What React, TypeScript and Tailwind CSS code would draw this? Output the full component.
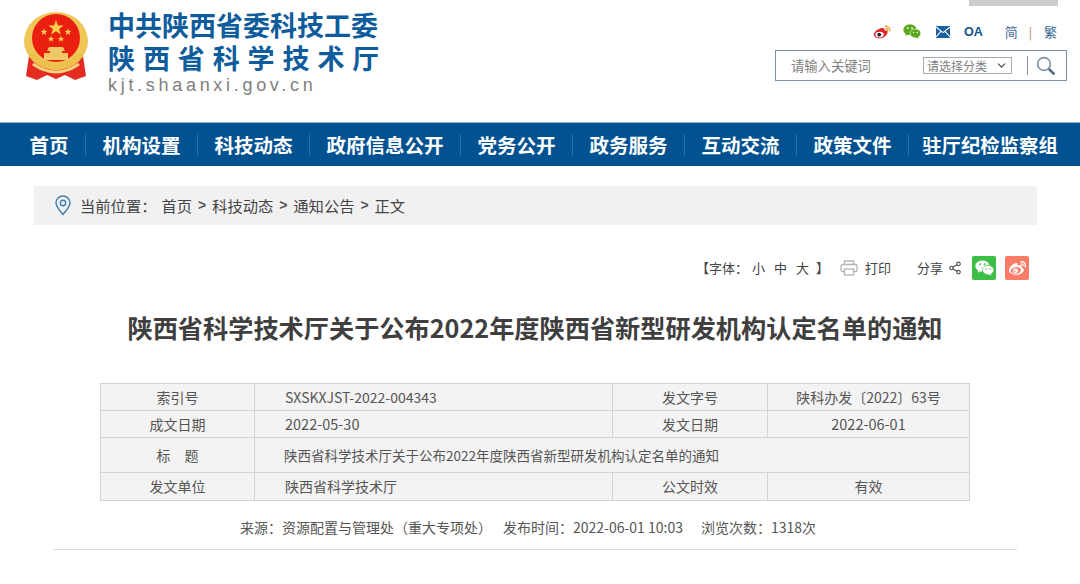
import type { ReactNode } from "react";
import { FiChevronDown, FiShare2 } from "react-icons/fi";
import { FaWeibo } from "react-icons/fa";

const font = "font-['Noto_Sans_CJK_SC','Noto_Sans',sans-serif]";

const navItems = ["首页", "机构设置", "科技动态", "政府信息公开", "党务公开", "政务服务", "互动交流", "政策文件"];

function starPoints(cx: number, cy: number, r: number) {
  const pts: string[] = [];
  for (let i = 0; i < 10; i++) {
    const rad = i % 2 === 0 ? r : r * 0.4;
    const a = -Math.PI / 2 + (i * Math.PI) / 5;
    pts.push(`${cx + rad * Math.cos(a)},${cy + rad * Math.sin(a)}`);
  }
  return pts.join(" ");
}

function Emblem() {
  return (
    <svg width="66" height="70" viewBox="0 0 66 70" className="shrink-0 mt-[4px]">
      <path d="M6 44 L3 64 L14 68 L24 63 L33 67 L42 63 L52 68 L63 64 L60 44 Z" fill="#e52b20" />
      <ellipse cx="33" cy="29" rx="32" ry="29" fill="#f0c659" />
      <path d="M6 44 Q33 72 60 44 L56 41 Q33 62 10 41 Z" fill="#edbf4b" />
      <path d="M10 52 Q33 68 56 52" fill="none" stroke="#f4d483" strokeWidth="3" />
      <circle cx="33" cy="26" r="24" fill="#e9200f" />
      <polygon points={starPoints(33, 16, 8)} fill="#f6d34e" />
      <polygon points={starPoints(21, 20, 3.6)} fill="#f6d34e" />
      <polygon points={starPoints(45, 20, 3.6)} fill="#f6d34e" />
      <polygon points={starPoints(28, 27, 3.4)} fill="#f6d34e" />
      <polygon points={starPoints(38, 27, 3.4)} fill="#f6d34e" />
      <path d="M26 35 H40 L42 39 H39 V41 H45 V48 H21 V41 H27 V39 H24 Z" fill="#f0c866" />
    </svg>
  );
}

function WeiboColor() {
  return (
    <svg width="18" height="15" viewBox="0 0 18 15">
      <path d="M7 3.5 C10 2.5 12 3 11.6 5.6 C14 5 15 6 14.6 7.6 C14 11 10 13.5 6.6 13.5 C3.5 13.5 .8 12 .8 9.6 C.8 7.5 4 4.4 7 3.5 Z" fill="#e2242b" />
      <ellipse cx="6.6" cy="9.6" rx="4.2" ry="2.9" fill="#fff" />
      <circle cx="6.2" cy="9.7" r="1.9" fill="#222" />
      <path d="M12 1 A5 5 0 0 1 17 6.5 M12.4 3.4 A2.6 2.6 0 0 1 14.8 6" fill="none" stroke="#f29a1f" strokeWidth="1.3" />
    </svg>
  );
}

function WechatIcon({ color, eye, size }: { color: string; eye: string; size: number }) {
  return (
    <svg width={size} height={size * 0.84} viewBox="0 0 18 15">
      <ellipse cx="7" cy="5.6" rx="6.7" ry="5.3" fill={color} />
      <path d="M3 9 L2.6 12 L6 10 Z" fill={color} />
      <ellipse cx="12.4" cy="9.4" rx="5.4" ry="4.4" fill={color} stroke={eye} strokeWidth=".6" />
      <path d="M15 12.4 L15.6 14.6 L12.8 13.4 Z" fill={color} />
      <circle cx="4.8" cy="4" r=".9" fill={eye} />
      <circle cx="9" cy="4" r=".9" fill={eye} />
      <circle cx="10.6" cy="8.4" r=".7" fill={eye} />
      <circle cx="14.2" cy="8.4" r=".7" fill={eye} />
    </svg>
  );
}

function MailIcon() {
  return (
    <svg width="14" height="12" viewBox="0 0 14 12">
      <rect width="14" height="12" fill="#1a5f9f" />
      <path d="M0 1 L7 6.6 L14 1 M0 11 L5 5.4 M14 11 L9 5.4" fill="none" stroke="#fff" strokeWidth="1.1" />
    </svg>
  );
}

function PrinterIcon() {
  return (
    <svg width="18" height="16" viewBox="0 0 18 16" fill="none" stroke="#b4b4b4" strokeWidth="1.3">
      <path d="M4.5 4.5 V1 H13.5 V4.5" />
      <rect x="1" y="4.5" width="16" height="7" rx="1.6" />
      <rect x="4.5" y="9" width="9" height="6" fill="#fff" />
    </svg>
  );
}

function SearchIcon() {
  return (
    <svg width="20" height="20" viewBox="0 0 20 20" fill="none" className="ml-[8px]">
      <circle cx="8" cy="8" r="6.4" stroke="#7d8fa9" strokeWidth="1.6" />
      <path d="M12.8 12.8 L18.4 18.4" stroke="#4f6484" strokeWidth="2.6" />
    </svg>
  );
}

function MetaRow({ cells, tall }: { cells: ReactNode[]; tall?: boolean }) {
  return (
    <div className={`flex border-b border-[#d3d3d3] last:border-b-0 ${tall ? "h-[35px]" : "h-[27px]"}`}>
      <div className="w-[154px] border-r border-[#d3d3d3] flex items-center justify-center">{cells[0]}</div>
      {cells.length === 2 ? (
        <div className="flex-1 flex items-center pl-[29px]">{cells[1]}</div>
      ) : (
        <>
          <div className="w-[358px] border-r border-[#d3d3d3] flex items-center pl-[30px]">{cells[1]}</div>
          <div className="w-[155px] border-r border-[#d3d3d3] flex items-center justify-center">{cells[2]}</div>
          <div className="flex-1 flex items-center justify-center">{cells[3]}</div>
        </>
      )}
    </div>
  );
}

function Sep() {
  return <span className="mx-[6px] w-[8px] text-center text-[14px] font-bold text-[#555555] font-['Liberation_Sans',sans-serif]">&gt;</span>;
}

export default function App() {
  return (
    <div className={`w-[1080px] h-[584px] overflow-hidden bg-white ${font}`}>
      {/* header */}
      <header className="h-[122px] flex justify-between">
        <div className="flex items-start pl-[23px] pt-[8px] gap-[19px]">
          <Emblem />
          <div>
            <div className="text-[#0f5c9c] text-[27px] leading-[33px] font-bold whitespace-nowrap">中共陕西省委科技工委</div>
            <div className="text-[#0f5c9c] text-[27px] leading-[33px] font-bold tracking-[7.9px] whitespace-nowrap">陕西省科学技术厅</div>
            <div className="text-[#808080] text-[18px] leading-[22px] tracking-[3.7px] font-['Liberation_Sans',sans-serif]">kjt.shaanxi.gov.cn</div>
          </div>
        </div>

        <div className="w-[292px] mr-[13px] flex flex-col items-end">
          <div className="w-[89px] h-[6px] bg-[#cccccc] mr-[9px]" />
          <div className="flex items-center h-[22px] mt-[15px] mr-[10px]">
            <WeiboColor />
            <span className="ml-[12px]"><WechatIcon color="#5aa91d" eye="#ffffff" size={18} /></span>
            <span className="ml-[15px]"><MailIcon /></span>
            <span className="text-[12.5px] font-bold font-['Liberation_Sans',sans-serif] ml-[14px] text-[#145290]">OA</span>
            <span className="text-[13px] ml-[22px] text-[#3b6b93]">简</span>
            <span className="text-[12px] ml-[11px] text-[#9c7b4d]">|</span>
            <span className="text-[13px] ml-[12px] text-[#3b6b93]">繁</span>
          </div>
          <div className="w-[292px] h-[31px] mt-[7px] border border-[#7f8eab] flex items-center">
            <span className="text-[13.3px] text-[#808080] ml-[15px] w-[132px] whitespace-nowrap">请输入关键词</span>
            <div className="w-[89px] h-[17px] border border-[#a9a9a9] flex items-center justify-between pl-[3px] pr-[3px] text-[12px] text-[#808080] whitespace-nowrap">
              请选择分类
              <FiChevronDown className="text-[#444444] text-[13px]" />
            </div>
            <div className="w-px h-[19px] bg-[#8594ab] ml-[15px]" />
            <SearchIcon />
          </div>
        </div>
      </header>

      {/* nav */}
      <nav className="h-[44px] bg-[#025291] border-t border-[#8aaecb] flex items-center pl-[13px]">
        {navItems.map((item, i) => (
          <div key={item} className="flex items-center">
            {i > 0 && <div className="w-px h-[22px] bg-[#2c6fa6]" />}
            <a href="#" className="px-[16.5px] text-white text-[19.5px] font-bold leading-[43px] whitespace-nowrap">{item}</a>
          </div>
        ))}
        <div className="w-px h-[22px] bg-[#2c6fa6]" />
        <a href="#" className="pl-[13px] text-white text-[19.4px] font-bold leading-[43px] whitespace-nowrap">驻厅纪检监察组</a>
      </nav>

      {/* breadcrumb */}
      <div className="mt-[20px] ml-[34px] w-[1003px] h-[39px] bg-[#f1f1f1] flex items-center pl-[20px] text-[15.3px] text-[#444444] whitespace-nowrap">
        <svg width="18" height="21" viewBox="0 0 18 21" fill="none" stroke="#3f7cb0" strokeWidth="1.4">
          <path d="M9 19.5 C5 14.5 2 11.5 2 8 A7 7 0 0 1 16 8 C16 11.5 13 14.5 9 19.5 Z" />
          <circle cx="9" cy="8" r="2.7" />
        </svg>
        <span className="ml-[8px]">当前位置：</span>
        <span className="ml-[5px]">首页</span>
        <Sep />
        <span>科技动态</span>
        <Sep />
        <span>通知公告</span>
        <Sep />
        <span>正文</span>
      </div>

      {/* tools */}
      <div className="mt-[28px] mr-[51px] h-[30px] flex items-center justify-end text-[13px] text-[#444444] whitespace-nowrap">
        <span>【字体：</span>
        <span className="ml-[4px]">小</span>
        <span className="ml-[9px]">中</span>
        <span className="ml-[9px]">大</span>
        <span className="ml-[7px]">】</span>
        <span className="ml-[11px]"><PrinterIcon /></span>
        <span className="ml-[7px]">打印</span>
        <span className="ml-[26px]">分享</span>
        <FiShare2 className="text-[#555555] text-[14px] ml-[5px]" />
        <div className="w-[24px] h-[24px] rounded-[2px] bg-[#3cbf45] flex items-center justify-center ml-[10px]">
          <WechatIcon color="#ffffff" eye="#3cbf45" size={19} />
        </div>
        <div className="w-[24px] h-[24px] rounded-[2px] bg-[#fa7c69] flex items-center justify-center ml-[9px]">
          <FaWeibo className="text-white text-[17px]" />
        </div>
      </div>

      {/* title */}
      <h1 className="mt-[26px] text-center text-[25.2px] leading-[36px] font-bold text-[#3f3f3f] whitespace-nowrap pr-[10px]">陕西省科学技术厅关于公布2022年度陕西省新型研发机构认定名单的通知</h1>

      {/* meta table */}
      <div className="mt-[38px] ml-[100px] w-[870px] border border-[#d3d3d3] bg-[#f3f3f3] text-[14px] text-[#555555] whitespace-nowrap">
        <MetaRow cells={["索引号", "SXSKXJST-2022-004343", "发文字号", "陕科办发〔2022〕63号"]} />
        <MetaRow cells={["成文日期", <span className="text-[14.5px]">2022-05-30</span>, "发文日期", <span className="text-[14.5px]">2022-06-01</span>]} />
        <MetaRow tall cells={["标　题", <span className="text-[13.5px]">陕西省科学技术厅关于公布2022年度陕西省新型研发机构认定名单的通知</span>]} />
        <MetaRow cells={["发文单位", "陕西省科学技术厅", "公文时效", "有效"]} />
      </div>

      {/* source line */}
      <div className="mt-[16px] pl-[240px] flex text-[14px] text-[#555555] leading-[20px] whitespace-nowrap">
        <span className="w-[263px]">来源：资源配置与管理处（重大专项处）</span>
        <span className="w-[198px]">发布时间：2022-06-01 10:03</span>
        <span>浏览次数：1318次</span>
      </div>
      <div className="mt-[12px] ml-[53px] w-[964px] h-px bg-[#d9d9d9]" />
    </div>
  );
}
